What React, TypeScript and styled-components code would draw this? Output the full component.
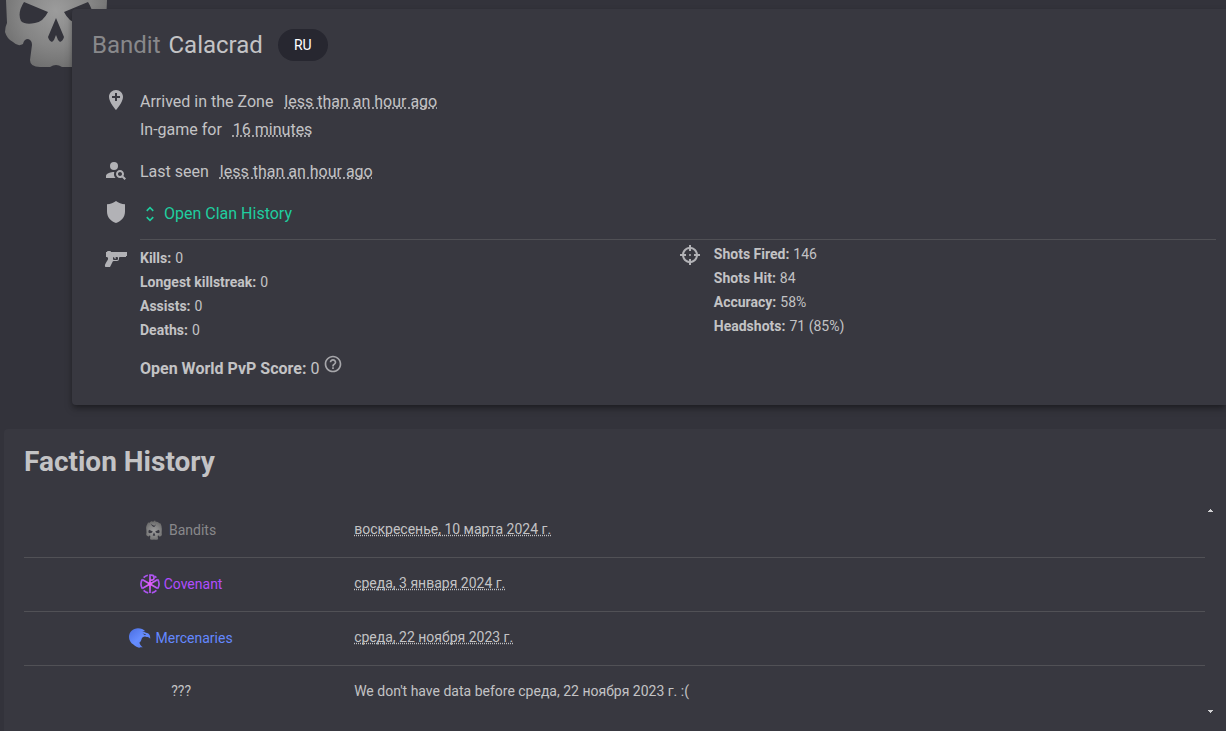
import React from 'react';
import styled, { createGlobalStyle } from 'styled-components';
import { MdAddLocation, MdPersonSearch, MdUnfoldMore, MdHelpOutline } from 'react-icons/md';

const GlobalStyle = createGlobalStyle`
  *, *::before, *::after { box-sizing: border-box; }
  html { background: #33333b; }
  body {
    margin: 0;
    font-family: Roboto, "Noto Sans", sans-serif;
    font-size: 16px;
    color: #c3c3c5;
    overflow: hidden;
  }
  h1, h2, p, ul, dl, dd { margin: 0; padding: 0; }
`;

const Page = styled.main`
  display: flex;
  flex-direction: column;
  gap: 24px;
  min-height: 100vh;
  padding-top: 9px;
`;

const ProfileWrap = styled.div`
  position: relative;
  padding-left: 72px;
`;

const Avatar = styled.div`
  position: absolute;
  left: 4px;
  top: -70px;
  svg { display: block; }
`;

const ProfileCard = styled.section`
  position: relative;
  padding: 20px 10px 21px 20px;
  background: #383840;
  border-radius: 4px 0 0 4px;
  box-shadow: 0 3px 5px -1px rgba(0, 0, 0, 0.3), 0 4px 8px rgba(0, 0, 0, 0.2);
`;

const TitleRow = styled.header`
  display: flex;
  align-items: center;
  gap: 15px;
  height: 32px;
`;

const PlayerName = styled.h1`
  font-size: 24px;
  line-height: 32px;
  font-weight: 400;
`;

const Rank = styled.span`
  margin-right: 8px;
  color: #88888b;
`;

const Chip = styled.span`
  padding: 0 16px;
  border-radius: 16px;
  background: #272730;
  color: #fff;
  font-size: 14px;
  line-height: 32px;
`;

const InfoList = styled.ul`
  display: flex;
  flex-direction: column;
  gap: 14px;
  padding: 27px 0 0 12px;
  list-style: none;
`;

const InfoItem = styled.li`
  display: flex;
  gap: 12px;
  line-height: 28px;
`;

const IconSlot = styled.span`
  flex: none;
  width: 24px;
  height: 24px;
  color: #b2b2b6;
  svg { display: block; }
`;

const Dotted = styled.abbr<{ $spaced?: boolean }>`
  margin-left: ${(p) => (p.$spaced ? '7px' : '0')};
  text-decoration: underline dotted;
  text-decoration-skip-ink: none;
`;

const ClanButton = styled.button`
  display: flex;
  align-items: center;
  gap: 4px;
  padding: 0;
  border: 0;
  background: none;
  color: #1fce9f;
  font: inherit;
  line-height: 28px;
  cursor: pointer;
`;

const Divider = styled.hr`
  margin: 11px 0 0 48px;
  border: 0;
  border-top: 1px solid #505055;
`;

const StatsGrid = styled.div`
  display: grid;
  grid-template-columns: 51.6% 1fr;
  padding: 2px 0 0 0;
  margin-left: 12px;
`;

const StatsBlock = styled.div<{ $top: number }>`
  display: flex;
  gap: 12px;
  padding-top: ${(p) => p.$top}px;
  ${IconSlot} { margin-top: 1px; }
`;

const Stats = styled.dl`
  font-size: 14px;
  line-height: 24px;
`;

const Stat = styled.div`
  display: flex;
  gap: 4px;
  dt { font-weight: 700; }
`;

const Score = styled.div`
  display: flex;
  gap: 4px;
  margin: 12px 0 0 48px;
  line-height: 30px;
`;

const HelpButton = styled.button`
  width: 20px;
  height: 20px;
  padding: 0;
  border: 0;
  background: none;
  color: #a6a6aa;
  cursor: pointer;
  svg { display: block; }
`;

const HistoryCard = styled.section`
  flex: 1;
  margin-left: 4px;
  padding: 16px 10px 8px 20px;
  background: #383840;
  border-radius: 4px 0 0 0;
`;

const HistoryTitle = styled.h2`
  font-size: 28px;
  line-height: 34px;
  font-weight: 700;
`;

const Scroller = styled.div`
  display: flex;
  margin-top: 25px;
`;

const HistoryTable = styled.table`
  flex: 1;
  border-collapse: separate;
  border-spacing: 0;
  table-layout: fixed;
  font-size: 14px;
  line-height: 20px;
`;

const Row = styled.tr`
  &:not(:last-child) > * { border-bottom: 1px solid #515156; }
`;

const FactionCell = styled.th`
  width: 26.6%;
  height: 54px;
  padding: 0 16px 4px;
  font-weight: 400;
`;

const DateCell = styled.td`
  padding: 0 16px 4px;
`;

const Faction = styled.span<{ $color: string; $gap: number }>`
  display: flex;
  align-items: center;
  justify-content: center;
  gap: ${(p) => p.$gap}px;
  padding-top: 2px;
  color: ${(p) => p.$color};
`;

const ScrollTrack = styled.div`
  display: flex;
  flex-direction: column;
  justify-content: space-between;
  width: 11px;
  padding: 2px 0 5px;
`;

const ScrollButton = styled.button`
  display: flex;
  align-items: center;
  justify-content: center;
  height: 8px;
  padding: 0;
  border: 0;
  background: none;
  color: #d0d0d2;
`;

type SkullProps = { width: number; height: number; id: string };

const Skull = ({ width, height, id }: SkullProps) => (
  <svg width={width} height={height} viewBox="0 0 104 128" aria-hidden="true">
    <defs>
      <radialGradient id={id} gradientUnits="userSpaceOnUse" cx="52" cy="72" r="72">
        <stop offset="0" stopColor="#9c9c9c" />
        <stop offset="0.5" stopColor="#858585" />
        <stop offset="1" stopColor="#646464" />
      </radialGradient>
    </defs>
    <path
      fill={`url(#${id})`}
      fillRule="evenodd"
      d="M2 61 Q-2 42 7 28 L14 13 L20 18 Q28 8 40 5 L44 12 L59 0 L61 9 Q78 9 88 20 L95 22 Q104 40 103 61 L102 84 Q104 91 103 96 Q101 102 95 104 Q88 109 84 103 Q83 98 79 100 Q76 101 76 106 L79 122 Q72 129 64 128 L58 128 Q52 124 46 128 L36 128 Q26 128 26 121 L28 106 Q28 101 24 100 Q20 100 19 105 Q14 108 9 103 Q3 100 1 93 Q1 88 3 84 Z
      M20 63 L44 73 Q39 83 31 84 Q21 86 17 82 Q13 74 20 63 Z
      M84 63 L60 73 Q65 83 73 84 Q83 86 87 82 Q91 74 84 63 Z
      M52 79 L60 98 Q59 102 56 103 L54 101 L52 96 L50 101 L48 103 Q45 102 44 98 Z
      M30 22 L42 32 L54 36 L64 26 L58 42 L50 44 L40 38 Z"
    />
  </svg>
);

const ShieldIcon = () => (
  <svg width="24" height="24" viewBox="0 0 24 24" fill="currentColor" aria-hidden="true">
    <path d="M12 1C9.5 2.9 6.5 3.9 3 4.3V11.5C3 17 6.7 21.4 12 23C17.3 21.4 21 17 21 11.5V4.3C17.5 3.9 14.5 2.9 12 1Z" />
  </svg>
);

const PistolIcon = () => (
  <svg width="24" height="24" viewBox="0 0 24 24" fill="currentColor" aria-hidden="true">
    <path d="M7,5H23V9H22V10H16A1,1 0 0,0 15,11V12A2,2 0 0,1 13,14H9.62C9.24,14 8.89,14.22 8.72,14.56L6.27,19.45C6.1,19.79 5.76,20 5.38,20H2C2,20 -1,20 3,14C3,14 6,10 2,10V5H3L3.5,4H6.5L7,5M14,12V11A1,1 0 0,0 13,10H12C12,10 11,11 12,12A2,2 0 0,1 10,10A1,1 0 0,0 9,11V12A1,1 0 0,0 10,13H13A1,1 0 0,0 14,12Z" />
  </svg>
);

const CrosshairIcon = () => (
  <svg width="24" height="24" viewBox="0 0 24 24" fill="currentColor" aria-hidden="true">
    <path d="M11,2V4.07C7.38,4.53 4.53,7.38 4.07,11H2V13H4.07C4.53,16.62 7.38,19.47 11,19.93V22H13V19.93C16.62,19.47 19.47,16.62 19.93,13H22V11H19.93C19.47,7.38 16.62,4.53 13,4.07V2M11,6.08V8H13V6.09C15.5,6.5 17.5,8.5 17.92,11H16V13H17.91C17.5,15.5 15.5,17.5 13,17.92V16H11V17.91C8.5,17.5 6.5,15.5 6.08,13H8V11H6.09C6.5,8.5 8.5,6.5 11,6.08M12,11A1,1 0 0,0 11,12A1,1 0 0,0 12,13A1,1 0 0,0 13,12A1,1 0 0,0 12,11Z" />
  </svg>
);

const CovenantIcon = () => (
  <svg width="20" height="20" viewBox="0 0 20 20" fill="none" aria-hidden="true">
    <defs>
      <radialGradient id="covenant" gradientUnits="userSpaceOnUse" cx="10" cy="10" r="10">
        <stop offset="0" stopColor="#e860fa" />
        <stop offset="1" stopColor="#a452ee" />
      </radialGradient>
    </defs>
    <g stroke="url(#covenant)" strokeWidth="1.7">
      <path d="M7.8 1.2A9 9 0 0 0 3.6 3.6M2.2 5.5A9 9 0 0 0 2.2 14.5M3.6 16.4A9 9 0 0 0 8.2 18.8M11.8 18.8A9 9 0 0 0 16.4 16.4M17.8 14.5A9 9 0 0 0 17.8 5.5M16.4 3.6A9 9 0 0 0 14.6 2.3" />
      <path d="M10 19V1.2H11.6A2.5 2.5 0 0 1 11.6 6.2H10M2.2 5.6L17.8 14.4M2.2 14.4L17.8 5.6" />
    </g>
  </svg>
);

const MercenaryIcon = () => (
  <svg width="22" height="20" viewBox="0 0 22 20" aria-hidden="true">
    <defs>
      <linearGradient id="mercenary" x1="0" y1="0" x2="1" y2="1">
        <stop offset="0" stopColor="#4a6de0" />
        <stop offset="0.5" stopColor="#668dff" />
        <stop offset="1" stopColor="#5578ea" />
      </linearGradient>
    </defs>
    <path
      fill="url(#mercenary)"
      d="M0 9C0 4 4 0.3 9 0.3C12 0.3 14.5 1.4 16.3 3.2L13.2 2.9L17 4.8C19.8 5 21.6 7 21.2 10.8C20.4 9.5 19.3 9 17.8 9L16 8.4C14.2 8.4 12.9 9.3 12.6 11C12.3 12.6 11.6 13.8 10.4 14.6C10.7 16.4 11.8 18 13.8 19.2C12.6 19.4 11.5 19.3 10.4 19L11.3 20C8.6 19.7 6.2 18.5 4.4 16.6C1.7 14.9 0 12.1 0 9ZM13.4 5.4L15.8 7L17.4 6.3Z"
      fillRule="evenodd"
    />
  </svg>
);

const combat = [
  ['Kills:', '0'],
  ['Longest killstreak:', '0'],
  ['Assists:', '0'],
  ['Deaths:', '0'],
];

const shooting = [
  ['Shots Fired:', '146'],
  ['Shots Hit:', '84'],
  ['Accuracy:', '58%'],
  ['Headshots:', '71 (85%)'],
];

const history = [
  { name: 'Bandits', color: '#88888b', gap: 7, icon: <Skull width={16} height={20} id="skull-small" />, date: 'воскресенье, 10 марта 2024 г.' },
  { name: 'Covenant', color: '#b14dff', gap: 4, icon: <CovenantIcon />, date: 'среда, 3 января 2024 г.' },
  { name: 'Mercenaries', color: '#6488ff', gap: 4, icon: <MercenaryIcon />, date: 'среда, 22 ноября 2023 г.' },
];

const StatList = ({ items }: { items: string[][] }) => (
  <Stats>
    {items.map(([label, value]) => (
      <Stat key={label}>
        <dt>{label}</dt>
        <dd>{value}</dd>
      </Stat>
    ))}
  </Stats>
);

export default function App() {
  return (
    <>
      <GlobalStyle />
      <Page>
        <ProfileWrap>
          <Avatar>
            <Skull width={104} height={128} id="skull-large" />
          </Avatar>
          <ProfileCard>
            <TitleRow>
              <PlayerName>
                <Rank>Bandit</Rank>
                Calacrad
              </PlayerName>
              <Chip>RU</Chip>
            </TitleRow>
            <InfoList>
              <InfoItem>
                <IconSlot><MdAddLocation size={24} /></IconSlot>
                <div>
                  <p>Arrived in the Zone <Dotted $spaced>less than an hour ago</Dotted></p>
                  <p>In-game for <Dotted $spaced>16 minutes</Dotted></p>
                </div>
              </InfoItem>
              <InfoItem>
                <IconSlot><MdPersonSearch size={24} /></IconSlot>
                <p>Last seen <Dotted $spaced>less than an hour ago</Dotted></p>
              </InfoItem>
              <InfoItem>
                <IconSlot><ShieldIcon /></IconSlot>
                <ClanButton type="button">
                  <MdUnfoldMore size={20} />
                  Open Clan History
                </ClanButton>
              </InfoItem>
            </InfoList>
            <Divider />
            <StatsGrid>
              <StatsBlock $top={4}>
                <IconSlot><PistolIcon /></IconSlot>
                <StatList items={combat} />
              </StatsBlock>
              <StatsBlock $top={0}>
                <IconSlot><CrosshairIcon /></IconSlot>
                <StatList items={shooting} />
              </StatsBlock>
            </StatsGrid>
            <Score>
              <strong>Open World PvP Score:</strong>
              <span>0</span>
              <HelpButton type="button" aria-label="About the score">
                <MdHelpOutline size={20} />
              </HelpButton>
            </Score>
          </ProfileCard>
        </ProfileWrap>

        <HistoryCard>
          <HistoryTitle>Faction History</HistoryTitle>
          <Scroller>
            <HistoryTable>
              <tbody>
                {history.map((h) => (
                  <Row key={h.name}>
                    <FactionCell scope="row">
                      <Faction $color={h.color} $gap={h.gap}>
                        {h.icon}
                        {h.name}
                      </Faction>
                    </FactionCell>
                    <DateCell><Dotted>{h.date}</Dotted></DateCell>
                  </Row>
                ))}
                <Row>
                  <FactionCell scope="row">???</FactionCell>
                  <DateCell>We don't have data before среда, 22 ноября 2023 г. :(</DateCell>
                </Row>
              </tbody>
            </HistoryTable>
            <ScrollTrack>
              <ScrollButton type="button" aria-label="Scroll up">
                <svg width="5" height="3" viewBox="0 0 5 3" fill="currentColor" shapeRendering="crispEdges"><path d="M2 0H3V1H4V2H5V3H0V2H1V1H2Z" /></svg>
              </ScrollButton>
              <ScrollButton type="button" aria-label="Scroll down">
                <svg width="5" height="3" viewBox="0 0 5 3" fill="currentColor" shapeRendering="crispEdges"><path d="M0 0H5V1H4V2H3V3H2V2H1V1H0Z" /></svg>
              </ScrollButton>
            </ScrollTrack>
          </Scroller>
        </HistoryCard>
      </Page>
    </>
  );
}
